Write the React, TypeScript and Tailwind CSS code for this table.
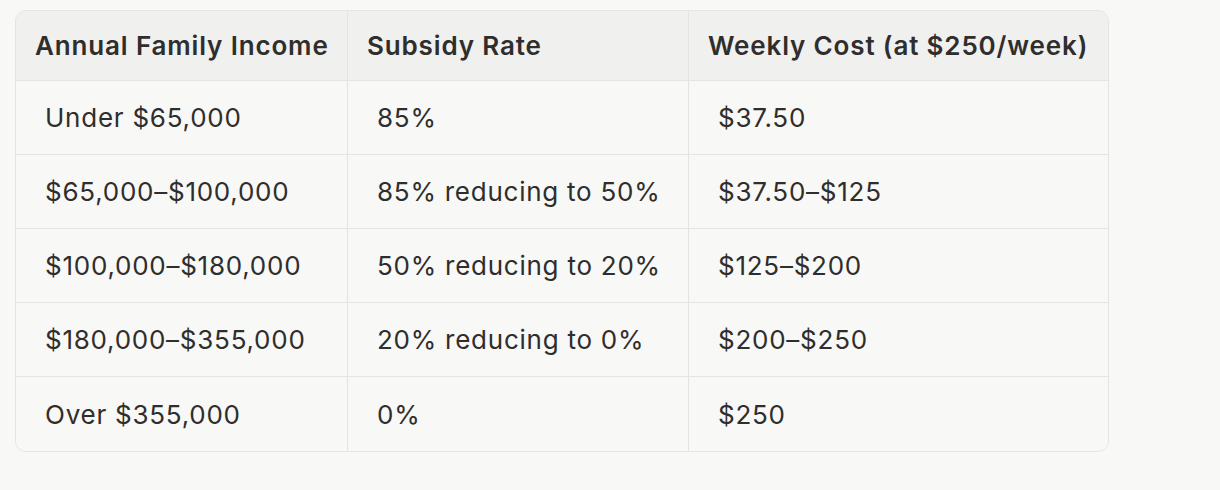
import React from "react";

const rows: [string, string, string][] = [
  ["Under $65,000", "85%", "$37.50"],
  ["$65,000–$100,000", "85% reducing to 50%", "$37.50–$125"],
  ["$100,000–$180,000", "50% reducing to 20%", "$125–$200"],
  ["$180,000–$355,000", "20% reducing to 0%", "$200–$250"],
  ["Over $355,000", "0%", "$250"],
];

const headers = ["Annual Family Income", "Subsidy Rate", "Weekly Cost (at $250/week)"];

export default function App() {
  return (
    <div
      className="w-[1220px] h-[490px] bg-[#f8f8f7] pt-[10px] pl-[15px] text-[#2f2e2c]"
      style={{ fontFamily: "Inter, 'Noto Sans', sans-serif" }}
    >
      <div className="w-[1094px] border border-[#e4e4e2] rounded-[11px] overflow-hidden">
        <div className="grid grid-cols-[332px_341px_419px]">
          {headers.map((h, i) => (
            <div
              key={h}
              className={`h-[70px] bg-[#f0f0ef] border-b border-[#e4e4e2] flex items-center pl-[19px] pb-[1px] text-[26px] font-semibold tracking-[0.85px] ${
                i < 2 ? "border-r" : ""
              }`}
            >
              {h}
            </div>
          ))}
          {rows.map((r, ri) =>
            r.map((c, ci) => (
              <div
                key={`${ri}-${ci}`}
                className={`h-[74px] bg-[#f8f8f7] border-[#e4e4e2] flex items-center pl-[29px] text-[26px] tracking-[0.75px] ${
                  ci < 2 ? "border-r" : ""
                } ${ri < rows.length - 1 ? "border-b" : ""}`}
              >
                {c}
              </div>
            ))
          )}
        </div>
      </div>
    </div>
  );
}
